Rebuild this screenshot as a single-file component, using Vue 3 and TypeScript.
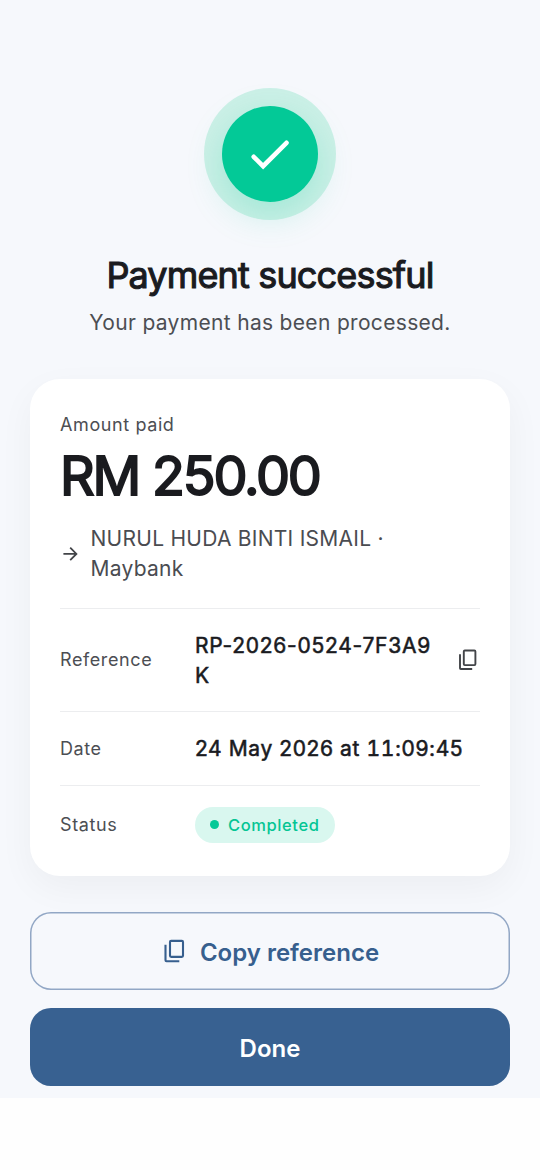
<script setup lang="ts">
const amount: string = 'RM 250.00'
const reference: string = 'RP-2026-0524-7F3A9K'
const day: string = '24 May 2026'
const hours: string = '11'
const minutes: string = ':09:45'
</script>

<template>
  <div class="screen">
    <main class="content">
      <div class="halo">
        <div class="disc">
          <svg width="48" height="48" viewBox="0 0 48 48" fill="none" stroke="#fff" stroke-width="4.6" stroke-linecap="round" stroke-linejoin="miter">
            <path d="M7.7 26.8 17.1 36.2 40.5 12.8" />
          </svg>
        </div>
      </div>
      <h1>Payment successful</h1>
      <p class="subtitle">Your payment has been processed.</p>

      <section class="card">
        <div class="label">Amount paid</div>
        <div class="amount">{{ amount }}</div>
        <div class="recipient">
          <svg width="21" height="21" viewBox="0 0 21 21" fill="none" stroke="#424448" stroke-width="1.8">
            <path d="M3.4 9.9H16.2M10.2 3.7 16.4 9.9 10.2 16.1" />
          </svg>
          <span>NURUL HUDA BINTI ISMAIL · Maybank</span>
        </div>
        <div class="row reference">
          <span class="label">Reference</span>
          <span class="value">{{ reference }}</span>
          <svg class="copy" width="24" height="24" viewBox="0 0 24 24" fill="none" stroke="#424448" stroke-width="1.9" stroke-linejoin="round">
            <rect x="7.8" y="2.5" width="11.6" height="14.6" rx="1" />
            <path d="M4 6.2V20.2Q4 21 4.8 21H16.2" />
          </svg>
        </div>
        <div class="row date">
          <span class="label">Date</span>
          <span class="value">{{ day }} at <span class="tabular">{{ hours }}</span>{{ minutes }}</span>
        </div>
        <div class="row status">
          <span class="label">Status</span>
          <span class="badge"><i class="dot"></i>Completed</span>
        </div>
      </section>

      <button class="button outlined">
        <svg width="27" height="27" viewBox="0 0 27 27" fill="none" stroke="#375f8e" stroke-width="2.1" stroke-linejoin="round">
          <rect x="9" y="2.9" width="13" height="16" rx="1.1" />
          <path d="M4.5 6.8V22.3Q4.5 23.3 5.5 23.3H18.3" />
        </svg>
        <span class="caption">Copy reference</span>
      </button>
      <button class="button filled"><span class="caption">Done</span></button>
    </main>
  </div>
</template>

<style>
body {
  background: #fff;
}
</style>

<style scoped>
.screen {
  height: 1170px;
  box-sizing: border-box;
  background: linear-gradient(#f6f8fc 1098px, #fefefe 1098px);
  font-family: Inter, "Liberation Sans", sans-serif;
  color: #1a1b1f;
  overflow: hidden;
}
.content {
  display: flex;
  flex-direction: column;
  align-items: center;
  padding: 88px 30px 0;
}
.halo {
  width: 132px;
  height: 132px;
  border-radius: 50%;
  background: #ccf0e7;
  display: flex;
  align-items: center;
  justify-content: center;
}
.disc {
  width: 96px;
  height: 96px;
  border-radius: 50%;
  background: #03c997;
  box-shadow: 0 12px 36px rgba(3, 201, 151, 0.22);
  display: flex;
  align-items: center;
  justify-content: center;
}
h1 {
  margin: 31px 0 0;
  font-size: 36px;
  line-height: 48px;
  font-weight: 400;
  -webkit-text-stroke: 1.1px currentColor;
  letter-spacing: -0.84px;
  white-space: nowrap;
}
.subtitle {
  margin: 9px 0 0;
  font-size: 21px;
  line-height: 30px;
  font-weight: 400;
  letter-spacing: 0.32px;
  color: #4c4e53;
}
.card {
  width: 480px;
  height: 497px;
  box-sizing: border-box;
  margin-top: 41px;
  padding: 34px 30px 0;
  border-radius: 30px;
  background: #fff;
  box-shadow: 0 12px 36px rgba(0, 0, 0, 0.045);
}
.label {
  font-size: 18px;
  line-height: 24px;
  font-weight: 400;
  letter-spacing: 0.6px;
  color: #4c4e53;
}
.amount {
  margin-top: 6px;
  font-size: 54px;
  line-height: 66px;
  font-weight: 400;
  -webkit-text-stroke: 1.9px currentColor;
  letter-spacing: -2.2px;
  white-space: nowrap;
}
.recipient {
  display: flex;
  align-items: center;
  gap: 9.5px;
  margin-top: 15px;
  height: 60px;
  font-size: 21px;
  line-height: 30px;
  font-weight: 400;
  letter-spacing: 0.26px;
  color: #4a4c51;
}
.recipient span {
  width: 320px;
}
.row {
  display: flex;
  align-items: center;
  box-sizing: border-box;
  border-top: 1.5px solid #ecedef;
}
.row .label {
  width: 135px;
  flex: none;
}
.reference {
  margin-top: 24px;
  height: 103px;
}
.date {
  height: 74px;
}
.status {
  height: 78px;
}
.value {
  font-size: 21px;
  line-height: 30px;
  font-weight: 400;
  -webkit-text-stroke: 0.55px currentColor;
  letter-spacing: 0.75px;
}
.date .value {
  letter-spacing: 0.6px;
}
.tabular {
  font-variant-numeric: tabular-nums;
}
.reference .value {
  width: 246px;
  padding-top: 1px;
  word-break: break-all;
}
.copy {
  margin-left: 15px;
}
.badge {
  display: flex;
  align-items: center;
  gap: 9px;
  height: 36px;
  padding: 0 15px;
  border-radius: 18px;
  background: #d9f7ef;
  color: #05c594;
  font-size: 16.5px;
  font-weight: 500;
  letter-spacing: 0.6px;
}
.dot {
  width: 9px;
  height: 9px;
  border-radius: 50%;
  background: #03c997;
}
.button {
  width: 480px;
  height: 78px;
  box-sizing: border-box;
  border: 0;
  border-radius: 21px;
  display: flex;
  align-items: center;
  justify-content: center;
  gap: 12px;
  padding: 0;
  font-family: inherit;
  font-size: 24px;
  line-height: 30px;
  font-weight: 600;
  letter-spacing: 0;
}
.caption {
  padding-top: 3px;
}
.outlined {
  margin-top: 36px;
  box-shadow: inset 0 0 0 1.5px #92a7c5;
  background: #f6f8fc;
  color: #375f8e;
}
.filled {
  margin-top: 18px;
  background: #386191;
  color: #fff;
}
</style>
